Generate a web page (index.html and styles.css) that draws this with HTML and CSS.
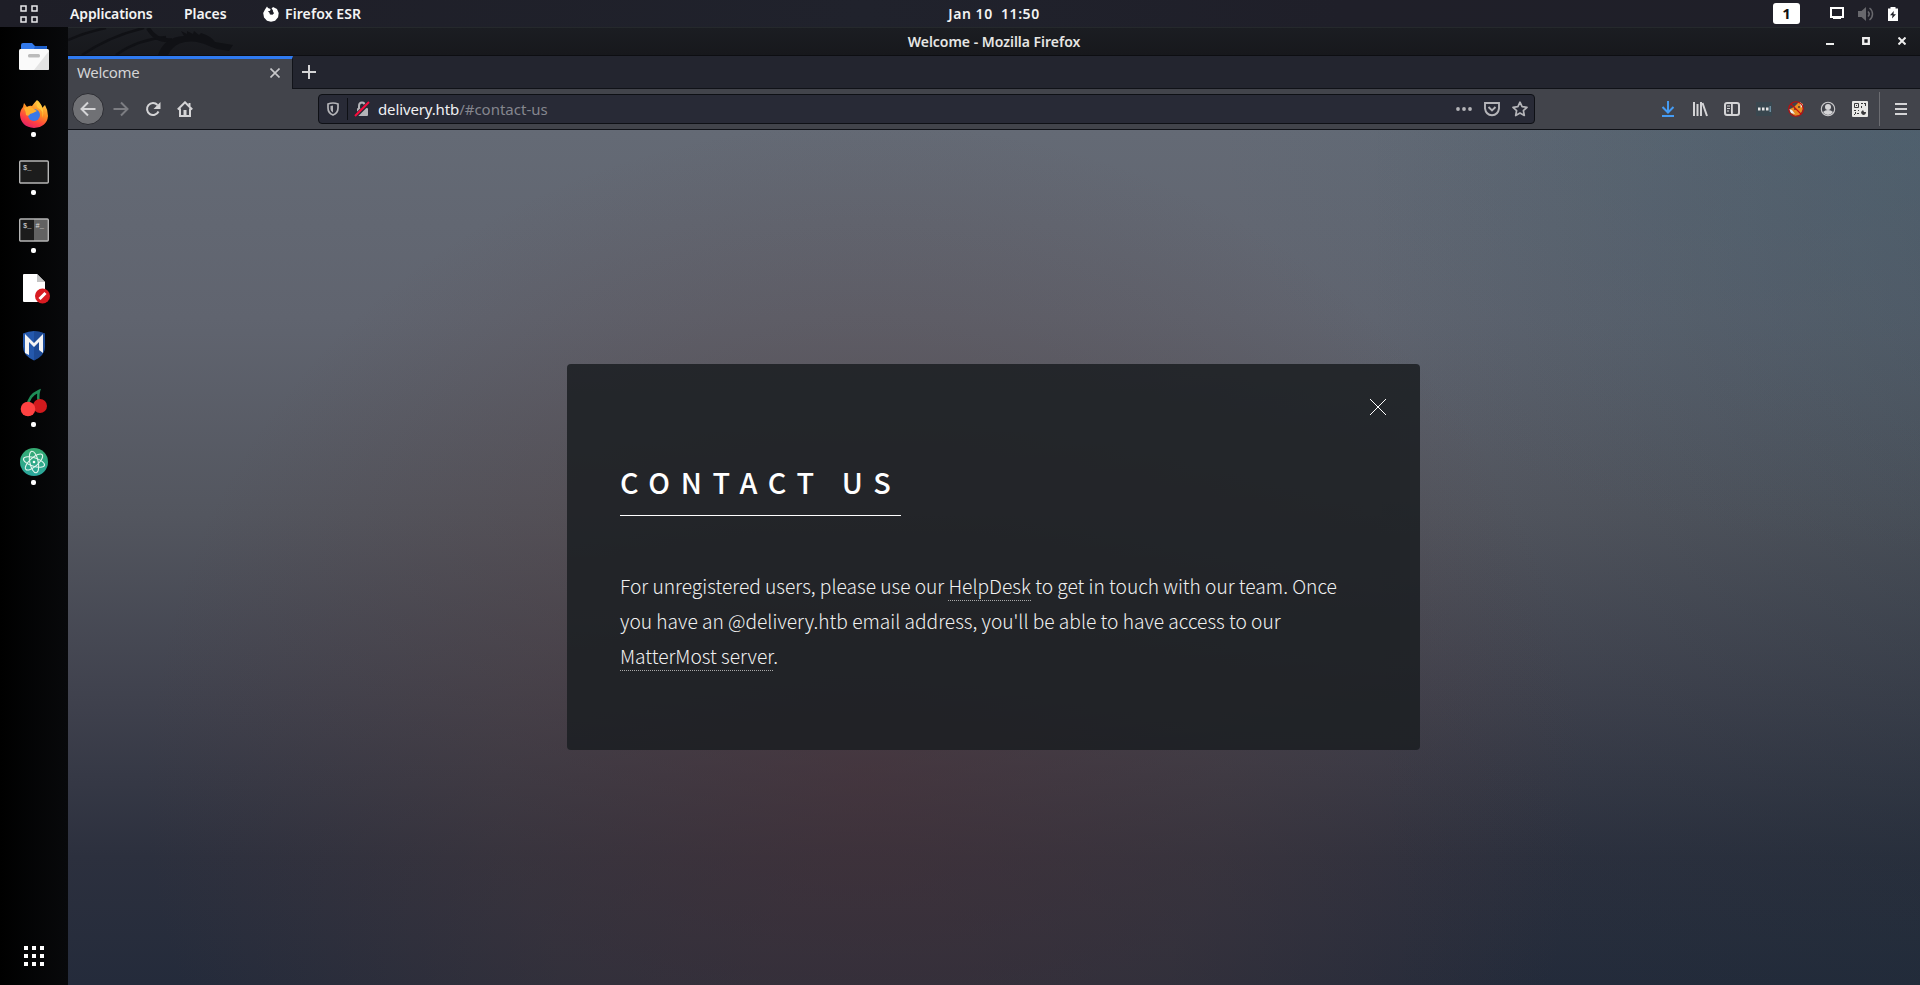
FILE: index.html
```html
<!DOCTYPE html>
<html lang="en">
<head>
<meta charset="utf-8">
<title>Welcome</title>
<link rel="stylesheet" href="styles.css">
</head>
<body>
<div class="desktop">
  <header class="topbar">
    <div class="topbar-left">
      <svg class="overview" width="18" height="18" viewBox="0 0 18 18" fill="none" stroke="#e8e8ea" stroke-width="1.5"><path d="M1 1h5v5H1zM12 1h5v5h-5zM1 12h5v5H1zM12 12h5v5h-5z"/></svg>
      <span class="menu-apps">Applications</span>
      <span class="menu-places">Places</span>
      <svg class="menu-fx" width="16" height="16" viewBox="0 0 16 16"><path fill="#fff" d="M4 .5 5 2l2.600 1-.5 1.700-2.300.8 1.500 1 .7 2 2.500.2 1.500-1.500L10 5.500 9.800 4 8.500 2.800 10 1l4 2 1.700 4-.6 4.200-3 3.500L8 15.700l-4-1L1 11.500.2 7 2 3.500z"/></svg>
      <span class="menu-esr">Firefox ESR</span>
    </div>
    <span class="clock">Jan 10&nbsp; 11:50</span>
    <div class="topbar-right">
      <span class="workspace">1</span>
      <svg class="screen" width="14" height="13" viewBox="0 0 14 13"><path fill="none" stroke="#fff" stroke-width="2" d="M1 1h12v9H1z"/><path fill="#fff" d="M3 10h8v2H3z"/></svg>
      <svg class="volume" width="16" height="14" viewBox="0 0 16 14"><path fill="#68686d" d="M0 4h3.500L8 0v14L3.500 10H0z"/><path fill="none" stroke="#68686d" stroke-width="1.500" d="M10 4.500c1.500 1.500 1.500 3.500 0 5M11.500 1c4 3 4 9 0 12"/></svg>
      <svg class="battery" width="10" height="14" viewBox="0 0 10 14"><path fill="#fff" d="M0 1.500h2.500V0h5v1.500H10V14H0z"/><path fill="#1f2029" d="M5.800 4 2 8.200h2.500L4 11.500 8 7.300H5.500z"/></svg>
    </div>
  </header>

  <aside class="dock">
    <div class="dock-item">
      <svg width="32" height="32" viewBox="0 0 32 32"><path fill="#3279ea" d="M3 5q0-2 2-2h9l3 3h12v8H3z"/><path fill="#1e5fc9" d="M17 6h10q2 0 2 2v1H16z"/><rect x="1" y="9" width="30" height="21" rx="1.500" fill="#fafafa"/><path fill="#e3e3e3" d="M31 11v17.500q0 1.500-1.500 1.500H16z"/><rect x="10" y="14" width="12" height="3.500" rx="1.500" fill="#bbb"/></svg>
    </div>
    <div class="dock-item running">
      <svg width="32" height="32" viewBox="0 0 32 32"><defs><linearGradient id="fx" x1=".8" y1="0" x2=".3" y2="1"><stop offset="0" stop-color="#ffd54a"/><stop offset=".45" stop-color="#ff8a22"/><stop offset=".75" stop-color="#ff3f42"/><stop offset="1" stop-color="#e0206b"/></linearGradient></defs><path fill="url(#fx)" d="M19 2q4 3 5 8l3-3q3 5 3 11-1 11-14 12Q3 29 2 17q0-5 3-8l1-4 3 4q3-2 5-1 3-4 5-6z"/><circle cx="16" cy="17" r="6" fill="#3a78e8"/><path fill="#ffb02e" d="M6 10q5-3 10 1l3 2-4 2-3 1q-1 3-4 1 0-3-2-7z"/><path fill="#ffc83c" d="M20 3q8 8 4 17 2-8-4-10-3-3 0-7z"/></svg>
    </div>
    <div class="dock-item running">
      <svg width="32" height="32" viewBox="0 0 32 32"><rect x="1.700" y="5" width="28.600" height="22" rx="1" fill="#1c1c1c" stroke="#b5b5b5" stroke-width="1.400"/><text x="5" y="14" class="prompt">$_</text></svg>
    </div>
    <div class="dock-item running">
      <svg width="32" height="32" viewBox="0 0 32 32"><rect x="1.700" y="5" width="28.600" height="22" rx="1" fill="#1c1c1c"/><path fill="#626262" d="M16 5h14v22H16z"/><rect x="1.700" y="5" width="28.600" height="22" rx="1" fill="none" stroke="#b5b5b5" stroke-width="1.400"/><text x="5" y="14" class="prompt">$_</text><text x="17.500" y="14" class="prompt">#_</text></svg>
    </div>
    <div class="dock-item">
      <svg width="32" height="32" viewBox="0 0 32 32"><path fill="#fff" d="M6 2h13l8 8v20H6q-1 0-1-1V3q0-1 1-1z"/><path fill="#c4c4c4" d="M19 2l8 8h-8z"/><circle cx="24.500" cy="24" r="7.500" fill="#d81b21"/><path stroke="#fff" stroke-width="3" d="M21.500 27l6-6"/></svg>
    </div>
    <div class="dock-item">
      <svg width="32" height="32" viewBox="0 0 32 32"><path fill="#2458ac" d="M5 3.500q11-5 22 0v13q0 9-11 14Q5 25.500 5 16.500z"/><path fill="#173f84" d="M16 1q6 0 11 2.500v13q0 9-11 14z" opacity=".55"/><path fill="#f4f4f4" d="M7 23V4l9 9 9-9v19l-4-3V12l-5 5-5-5v13z"/></svg>
    </div>
    <div class="dock-item running">
      <svg width="32" height="32" viewBox="0 0 32 32"><path fill="none" stroke="#1f8d57" stroke-width="2.500" d="M10 18q0-10 11-15-2 7 1 13"/><circle cx="22" cy="18" r="7" fill="#d11a1d"/><circle cx="10" cy="21" r="7.300" fill="#ff4242"/></svg>
    </div>
    <div class="dock-item running">
      <svg width="32" height="32" viewBox="0 0 32 32"><defs><linearGradient id="at" x1="0" y1="0" x2="0" y2="1"><stop offset="0" stop-color="#35aa70"/><stop offset="1" stop-color="#2aa79e"/></linearGradient></defs><circle cx="16" cy="16" r="14" fill="url(#at)"/><g fill="none" stroke="#e5f5ee" stroke-width="1.100"><ellipse cx="16" cy="16" rx="11" ry="4.200" transform="rotate(18 16 16)"/><ellipse cx="16" cy="16" rx="11" ry="4.200" transform="rotate(78 16 16)"/><ellipse cx="16" cy="16" rx="11" ry="4.200" transform="rotate(138 16 16)"/></g><circle cx="16" cy="16" r="1.300" fill="#fff"/></svg>
    </div>
    <svg class="app-grid" width="20" height="20" viewBox="0 0 20 20"><path fill="#fff" d="M0 0h4v4H0zM8 0h4v4H8zM16 0h4v4h-4zM0 8h4v4H0zM8 8h4v4H8zM16 8h4v4h-4zM0 16h4v4H0zM8 16h4v4H8zM16 16h4v4h-4z"/></svg>
  </aside>

  <main class="window">
    <div class="titlebar">
      <svg class="dragon" width="170" height="27" viewBox="0 0 170 27"><g fill="none" stroke="#101115" stroke-width="2.500"><path d="M0 12Q18 4 38 0M14 27Q42 8 76 0M48 27Q68 12 98 9"/><path d="M80 0q8 14 24 12" stroke-width="4"/></g><path fill="#101115" d="M90 27q6-18 26-19l-3-5 6 3 0-3 6 3 1-3 5 4 2-2q10 3 14 9l18 3-4 6-12-2-8-3q-12-6-24-4-12 2-17 13z"/></svg>
      <span class="window-title">Welcome - Mozilla Firefox</span>
      <div class="window-buttons">
        <svg width="8" height="8" viewBox="0 0 8 8"><path fill="#eee" d="M0 6h8v2H0z"/></svg>
        <svg width="8" height="8" viewBox="0 0 8 8"><path fill="none" stroke="#eee" stroke-width="2.300" d="M1.200 1.200h5.600v5.600H1.200z"/></svg>
        <svg width="8" height="8" viewBox="0 0 8 8"><path stroke="#eee" stroke-width="2" d="M.5.5l7 7M7.500.5l-7 7"/></svg>
      </div>
    </div>
    <div class="tabs">
      <div class="tab"><span class="tab-title">Welcome</span><svg width="10" height="10" viewBox="0 0 10 10"><path stroke="#c8c8ca" stroke-width="1.600" d="M.5.5l9 9M9.500.5l-9 9"/></svg></div>
      <svg class="new-tab" width="14" height="14" viewBox="0 0 14 14"><path fill="#d4d4d6" d="M6 0h2v6h6v2H8v6H6V8H0V6h6z"/></svg>
    </div>
    <div class="toolbar">
      <div class="nav">
        <span class="back"><svg width="16" height="16" viewBox="0 0 16 16"><path class="line" d="M15.500 8H1.500M8 1.500 1.500 8 8 14.500"/></svg></span>
        <span class="tool dim"><svg width="16" height="16" viewBox="0 0 16 16"><path class="line" d="M.5 8h14M8 1.500 14.500 8 8 14.500"/></svg></span>
        <span class="tool"><svg width="16" height="16" viewBox="0 0 16 16"><path class="line" d="M13.500 10.500A6 6 0 1 1 12.500 4"/><path fill="#d4d4d6" d="M15.500 1v7h-7z"/></svg></span>
        <span class="tool"><svg width="16" height="16" viewBox="0 0 16 16"><path class="line" d="M.8 8.500 8 1.300l7.200 7.200M3 7.500V15h10V7.500"/><path fill="#d4d4d6" d="M6.500 9h3v6h-3zM11.500 2h2v3h-2z"/></svg></span>
      </div>
      <div class="urlbar">
        <span class="shield"><svg width="12" height="14" viewBox="0 0 12 14"><path fill="none" stroke="#b4b4b8" stroke-width="1.700" d="M1 2q5-2 10 0v4q0 5-5 7Q1 11 1 6z"/><path fill="#b4b4b8" d="M6 3.500q-1 0-2.500.5v3q0 2 2.500 3.500z"/></svg></span>
        <span class="lock"><svg width="16" height="16" viewBox="0 0 16 16"><path fill="none" stroke="#b4b4b8" stroke-width="2" d="M5 8V5q0-3.500 3-3.500T11 5v3"/><rect x="3" y="7" width="11" height="8" rx="1" fill="#b4b4b8"/><path stroke="#292b36" stroke-width="4" d="M1 15.500 14.500 2"/><path stroke="#fb0c3d" stroke-width="2" d="M1 15 15 1"/></svg></span>
        <span class="url">delivery.htb<span class="path">/#contact-us</span></span>
        <span class="url-actions">
          <svg width="16" height="16" viewBox="0 0 16 16" fill="#b4b4b8"><circle cx="2" cy="8" r="1.900"/><circle cx="8" cy="8" r="1.900"/><circle cx="14" cy="8" r="1.900"/></svg>
          <svg width="16" height="16" viewBox="0 0 16 16" fill="none" stroke="#b4b4b8" stroke-width="1.900"><path d="M1 2h14v5.500q-1 6.500-7 6.700Q2 14 1 7.500zM4.500 6 8 9.500 11.500 6"/></svg>
          <svg width="16" height="16" viewBox="0 0 16 16" fill="none" stroke="#b4b4b8" stroke-width="1.700" stroke-linejoin="round"><path d="M8 1.200l2.100 4.500 4.900.6-3.600 3.300.9 4.900L8 12.100l-4.300 2.400.9-4.900L1 6.300l4.900-.6z"/></svg>
        </span>
      </div>
      <div class="extensions">
        <span class="tool"><svg width="16" height="16" viewBox="0 0 16 16"><path fill="none" stroke="#459cf4" stroke-width="2" d="M8 0v11M2.500 6 8 11.500 13.500 6M2 15h12"/></svg></span>
        <span class="tool"><svg width="16" height="16" viewBox="0 0 16 16"><path class="line" d="M2 1v14M5.500 3v12M9 1v14M10.500 2l4.500 13"/></svg></span>
        <span class="tool"><svg width="16" height="16" viewBox="0 0 16 16"><rect class="line" x="1" y="2" width="14" height="12" rx="2"/><path fill="#d4d4d6" d="M7 2h1.800v12H7zM3 4.500h3v1H3zM3 7h3v1H3zM3 9.500h2v1H3z"/></svg></span>
        <span class="tool"><svg width="16" height="16" viewBox="0 0 16 16"><path fill="#39474f" d="M0 1h16v14H0z"/><path fill="#e6e6e6" d="M2 6.500h2.500v3H2zM6 6.500h2.500v3H6zM10 6.500h2.500v3H10z"/><path fill="#6c8da0" d="M13.500 5H15v6h-1.500z"/></svg></span>
        <span class="tool"><svg width="16" height="16" viewBox="0 0 16 16"><path fill="#e98b23" d="M2 8 6 6l5-5 4 2v5l-3 6-5 1-4-3z"/><path fill="#eee" d="M1 8l3 1 3 4-4-1zM12 1l3 3-2 3z"/><path fill="#7a4d2a" d="M6 7h2v2H6zM10 5h2v2h-2z"/><circle cx="8" cy="8" r="7.300" fill="none" stroke="#c40c0c" stroke-width="1.100"/><path stroke="#c40c0c" stroke-width="1.100" d="M3 3l10 10"/></svg></span>
        <span class="tool"><svg width="16" height="16" viewBox="0 0 16 16"><circle cx="8" cy="8" r="6.700" fill="none" stroke="#c9c9cb" stroke-width="1.100"/><circle cx="8" cy="6" r="3" fill="#d4d4d6"/><path fill="#d4d4d6" d="M3 11q2-2 5-2t5 2q-2 3-5 3t-5-3z"/></svg></span>
        <span class="tool"><svg width="16" height="16" viewBox="0 0 16 16"><rect width="16" height="16" rx="1" fill="#e9e9e7"/><g fill="none" stroke="#3a3a3c"><path d="M2.500 2.500h4v4h-4zM9 2.500h2M13.500 2v3M12 2.500h2M9.500 5v2M2 9.500h2M6 9.500h1M3.500 11v2M5 12.500h2M2 13.500h1"/></g><path fill="#3a3a3c" d="M4 4h1v1H4zM9 11l2-2 1 2 2 0q0 3-3 3-2-1-2-3z"/></svg></span>
        <span class="menu"><svg width="12" height="12" viewBox="0 0 12 12"><path fill="#d4d4d6" d="M0 0h12v2H0zM0 5h12v2H0zM0 10h12v2H0z"/></svg></span>
      </div>
    </div>
    <section class="page">
      <article class="card">
        <svg class="card-close" width="16" height="16" viewBox="0 0 16 16"><path stroke="#fff" stroke-width="1" d="M0 0l16 16M16 0 0 16"/></svg>
        <h2>CONTACT US</h2>
        <p>For unregistered users, please use our <a>HelpDesk</a> to get in touch with our team. Once<br>you have an @delivery.htb email address, you'll be able to have access to our<br><a>MatterMost server</a>.</p>
      </article>
    </section>
  </main>
</div>
</body>
</html>
```
FILE: styles.css
```css
* { box-sizing: border-box; }
body { margin: 0; background: #000; font-family: "Noto Sans", sans-serif; overflow: hidden; }
svg { display: block; flex: none; }
.desktop { width: 1920px; height: 985px; display: grid; grid-template: 27px 1fr / 68px 1fr; }

.topbar { grid-column: 1 / 3; display: grid; grid-template-columns: 1fr auto 1fr; align-items: center; background: linear-gradient(90deg, #1e1e27, #20222c 45%, #1f1f29 70%, #1f1f28); color: #f4f4f4; font-size: 14px; font-weight: 600; line-height: 27px; white-space: nowrap; }
.topbar-left { display: flex; align-items: center; padding-left: 20px; }
.menu-apps { width: 114px; margin-left: 32px; letter-spacing: -.13px; }
.menu-places { width: 79px; letter-spacing: -.05px; }
.menu-esr { margin-left: 6px; letter-spacing: .1px; }
.clock { position: relative; left: 34px; letter-spacing: .55px; }
.topbar-right { display: flex; align-items: center; justify-content: flex-end; padding-right: 22px; }
.workspace { width: 27px; height: 21px; margin-right: 30px; border-radius: 3px; background: #fff; color: #111; text-align: center; font-weight: 700; font-size: 15px; line-height: 21px; }
.screen { margin-right: 14px; }
.volume { margin-right: 14px; }

.dock { display: flex; flex-direction: column; background: linear-gradient(90deg, #000, #08090b); align-items: center; }
.dock-item { position: relative; width: 68px; height: 58px; display: flex; align-items: center; justify-content: center; }
.running::after { content: ""; position: absolute; left: 31px; bottom: 6px; width: 5px; height: 5px; border-radius: 2px; background: #fff; }
.prompt { font: 7px "Liberation Mono", monospace; fill: #ddd; }
.app-grid { margin-top: auto; margin-bottom: 19px; }

.window { display: flex; flex-direction: column; min-width: 0; border-top: 1px solid #25292c; }
.titlebar { position: relative; flex: none; height: 28px; display: flex; align-items: center; justify-content: center; background: linear-gradient(#1b1d22, #17181c); border-bottom: 1px solid #0d0e12; }
.dragon { position: absolute; left: 0; top: 0; }
.window-title { color: #e6e6e4; font-size: 14px; font-weight: 600; letter-spacing: -.02px; white-space: nowrap; }
.window-buttons { position: absolute; right: 14px; top: 9px; display: flex; gap: 28px; }
.tabs { flex: none; height: 33px; display: flex; background: #23252f; border-bottom: 1px solid #101218; }
.tab { width: 225px; height: 33px; display: flex; align-items: center; justify-content: space-between; padding: 0 12px 2px 9px; background: #42444b; border-top: 3px solid #2f7af0; border-right: 1px solid #111319; color: #d4d4d5; font-size: 15px; line-height: 20px; }
.tab-title { letter-spacing: -.35px; padding-bottom: 2px; }
.new-tab { margin: 9px 0 0 9px; }
.toolbar { flex: none; height: 41px; display: flex; align-items: center; background: #42444b; border-bottom: 1px solid #101218; }
.nav { display: flex; align-items: center; width: 250px; padding-left: 4px; }
.back { width: 32px; height: 32px; margin-right: 1px; display: flex; align-items: center; justify-content: center; border-radius: 50%; background: #707175; border: 1px solid #2c2d33; }
.line { fill: none; stroke: #d4d4d6; stroke-width: 2; }
.tool { width: 32px; display: flex; justify-content: center; }
.dim { opacity: .4; }
.urlbar { width: 1217px; height: 30px; display: flex; align-items: center; background: #282a36; border: 1px solid #0e1015; border-radius: 4px; }
.shield { width: 29px; height: 22px; padding-left: 8px; display: flex; align-items: center; border-right: 1px solid #0e1015; }
.lock { margin-left: 6px; }
.url { margin-left: 8px; color: #f0f0f2; font-size: 15px; letter-spacing: -.13px; white-space: nowrap; }
.path { color: #85868e; letter-spacing: 0; }
.url-actions { margin-left: auto; padding-right: 6px; display: flex; gap: 12px; }
.extensions { margin-left: auto; display: flex; align-items: center; }
.menu { height: 34px; margin-left: 3px; padding: 0 13px 0 15px; display: flex; align-items: center; border-left: 1px solid #6b6c71; }

.page { flex: 1; display: flex; justify-content: center; align-items: flex-start; padding: 234px 1px 0 0; background:
  radial-gradient(ellipse 720px 660px at 43% 76%, rgba(82,50,54,.48), rgba(84,60,60,.3) 50%, rgba(84,66,68,0)),
  radial-gradient(ellipse 700px 420px at 100% 0, rgba(70,98,116,.4), rgba(70,98,116,0)),
  linear-gradient(90deg, rgba(24,40,52,0) 70%, rgba(24,44,54,.2)),
  linear-gradient(#646a75, #60646f 22%, #53565f 45%, #3f414d 67%, #2c303e 85%, #242b3b); }
.card { position: relative; width: 853px; height: 386px; padding: 97px 53px 0; border-radius: 4px; background: rgba(27,31,34,.87); color: #fff; font-family: "Noto Sans CJK JP", "Source Sans Pro", sans-serif; }
.card-close { position: absolute; left: 803px; top: 35px; }
.card h2 { width: 281px; height: 55px; margin: 0 0 53px; border-bottom: 1px solid #fff; font-size: 28.8px; font-weight: 500; line-height: 41px; letter-spacing: 10.67px; white-space: nowrap; }
.card p { margin: 0; font-size: 19.2px; font-weight: 300; line-height: 35px; letter-spacing: -.012px; white-space: nowrap; color: #f0f0f0; }
.card a { border-bottom: 1px dotted #aaa; }
```
